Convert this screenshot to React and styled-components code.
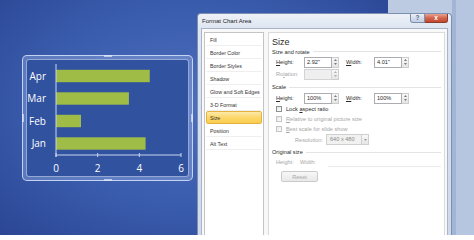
import React from 'react';
import styled, { createGlobalStyle } from 'styled-components';

const GlobalStyle = createGlobalStyle`
  html, body {
    margin: 0;
    padding: 0;
    width: 474px;
    height: 235px;
    overflow: hidden;
  }
  body {
    font-family: "Liberation Sans", Arial, sans-serif;
  }
`;

const Stage = styled.div`
  width: 474px;
  height: 235px;
  overflow: hidden;
  display: flex;
  align-items: flex-start;
  background:
    linear-gradient(90deg, transparent 0 388px, #bccae2 388px 452px, #a2b5d5 452px 456px, #b6c6e0 456px 100%),
    radial-gradient(ellipse 70% 95% at 40% 45%, #4d6ebd 0%, #3a5cac 45%, #2c4897 78%, #213c88 100%);
`;

/* ---------- chart ---------- */

const ChartFrame = styled.div`
  position: relative;
  flex-shrink: 0;
  margin: 55px 0 0 22px;
  width: 171px;
  height: 126px;
  box-sizing: border-box;
  padding: 3px;
  border: 1px solid rgba(215, 226, 250, 0.85);
  border-radius: 5px;
  background: rgba(170, 190, 235, 0.35);
`;

const ChartPlot = styled.div`
  width: 100%;
  height: 100%;
  box-sizing: border-box;
  border: 1px solid rgba(215, 226, 250, 0.6);
  border-radius: 3px;
  background: #31529f;
`;

const Handle = styled.span`
  position: absolute;
  width: ${p => (p.$vertical ? '2px' : '8px')};
  height: ${p => (p.$vertical ? '8px' : '2px')};
  background: rgba(225, 232, 250, 0.7);
  ${p => p.$side === 'top' && 'top: -1px; left: 81px;'}
  ${p => p.$side === 'bottom' && 'bottom: -1px; left: 81px;'}
  ${p => p.$side === 'left' && 'left: -1px; top: 58px;'}
  ${p => p.$side === 'right' && 'right: -1px; top: 58px;'}
`;

const months = [
  { label: 'Apr', value: 4.5 },
  { label: 'Mar', value: 3.5 },
  { label: 'Feb', value: 1.2 },
  { label: 'Jan', value: 4.3 },
];

function BarChart() {
  const x0 = 29;
  const unit = 125 / 6;
  const axisY = 95;
  return (
    <svg width="161" height="116" viewBox="0 0 161 116">
      {months.map((m, i) => {
        const cy = 16 + i * 22.5;
        return (
          <g key={m.label}>
            <rect x={x0} y={cy - 6.2} width={m.value * unit} height={12.4} fill="#9fbc47" />
            <text
              x="19"
              y={cy + 3.5}
              textAnchor="end"
              fill="#ffffff"
              fontSize="10"
              fontFamily="'Open Sans', sans-serif"
            >
              {m.label}
            </text>
          </g>
        );
      })}
      <line x1={x0} y1="4" x2={x0} y2={axisY + 2} stroke="#c9d5f0" strokeWidth="1" />
      <line x1={x0} y1={axisY} x2={x0 + 6 * unit} y2={axisY} stroke="#c9d5f0" strokeWidth="1" />
      {[0, 2, 4, 6].map(t => (
        <g key={t}>
          <line
            x1={x0 + t * unit}
            y1={axisY - 2}
            x2={x0 + t * unit}
            y2={axisY + 2}
            stroke="#c9d5f0"
            strokeWidth="1"
          />
          <text
            x={x0 + t * unit}
            y="111.5"
            textAnchor="middle"
            fill="#ffffff"
            fontSize="10"
            fontFamily="'Open Sans', sans-serif"
          >
            {t}
          </text>
        </g>
      ))}
    </svg>
  );
}

/* ---------- dialog ---------- */

const Dialog = styled.div`
  flex-shrink: 0;
  margin: 13px 0 0 4px;
  width: 255px;
  height: 230px;
  box-sizing: border-box;
  display: flex;
  flex-direction: column;
  padding: 0 3px;
  background: linear-gradient(180deg, #edf1f7 0, #dde5f1 15px, #cfd9ea 100%);
  border: 1px solid #7d90b2;
  border-bottom: none;
  border-radius: 4px 4px 0 0;
`;

const TitleBar = styled.div`
  display: flex;
  align-items: flex-start;
  height: 14px;
`;

const Title = styled.span`
  padding-left: 1px;
  font-size: 6px;
  line-height: 14px;
  color: #1c1c1c;
`;

const CaptionButtons = styled.div`
  display: flex;
  margin-left: auto;
`;

const CaptionButton = styled.div`
  width: ${p => (p.$close ? '23px' : '15px')};
  height: 9px;
  box-sizing: border-box;
  display: flex;
  align-items: center;
  justify-content: center;
  font-size: 6.5px;
  font-weight: bold;
  line-height: 1;
  color: ${p => (p.$close ? '#ffffff' : '#5a6478')};
  background: ${p =>
    p.$close
      ? 'linear-gradient(180deg, #e8a391 0%, #d2644c 50%, #c2462f 100%)'
      : 'linear-gradient(180deg, #eef2f8 0%, #d3dceb 50%, #c3cfe2 100%)'};
  border: 1px solid ${p => (p.$close ? '#8c3b2b' : '#7d8fae')};
  border-top: none;
  border-left: ${p => (p.$close ? 'none' : '1px solid #7d8fae')};
  border-radius: ${p => (p.$close ? '0 0 3px 0' : '0 0 0 3px')};
`;

const Body = styled.div`
  flex: 1;
  min-height: 0;
  display: flex;
  gap: 4px;
  padding: 3px 2px 0;
  background: #f8f8f8;
  border: 1px solid #a7b4c9;
  border-bottom: none;
`;

const CategoryList = styled.div`
  width: 60px;
  flex-shrink: 0;
  box-sizing: border-box;
  padding: 0 1px;
  background: #ffffff;
  border: 1px solid #c4c4c4;
`;

const CategoryItem = styled.div`
  height: 13px;
  box-sizing: border-box;
  padding-left: 3px;
  font-size: 5.3px;
  line-height: 12px;
  white-space: nowrap;
  overflow: hidden;
  color: #333333;
  border: 1px solid transparent;
  border-bottom-color: ${p => (p.$selected ? '#e4b241' : '#efefef')};
  ${p =>
    p.$selected &&
    `
    background: linear-gradient(180deg, #fde9a8 0%, #fbd76c 50%, #f9cd4f 100%);
    border-color: #e4b241;
    border-radius: 2px;
  `}
`;

const Panel = styled.div`
  flex: 1;
  display: flex;
  flex-direction: column;
  padding: 4px 3px 0;
  background: #ffffff;
  border: 1px solid #dadada;
  border-bottom: none;
  font-size: 5.6px;
  white-space: nowrap;
  color: #2b2b2b;
`;

const Heading = styled.div`
  height: 10px;
  font-size: 9px;
  line-height: 10px;
  color: #2a2a2a;
`;

const GroupHeader = styled.div`
  display: flex;
  align-items: center;
  height: ${p => p.$h || 9}px;
  margin-top: ${p => p.$mt || 0}px;
  color: #2b2b2b;

  &::after {
    content: '';
    flex: 1;
    height: 1px;
    margin-left: 3px;
    background: #e4e4e4;
  }
`;

const FieldRow = styled.div`
  display: flex;
  align-items: center;
  height: 12px;
  padding-left: 4px;
`;

const FieldLabel = styled.span`
  width: 28px;
  flex-shrink: 0;
  color: ${p => (p.$disabled ? '#a6a6a6' : '#2b2b2b')};
`;

const SpinBox = styled.div`
  display: flex;
  height: 11px;
  margin-right: 7px;
`;

const SpinInput = styled.div`
  width: 28px;
  box-sizing: border-box;
  padding-left: 2px;
  line-height: 9px;
  border: 1px solid ${p => (p.$disabled ? '#d4d4d4' : '#abadb3')};
  background: ${p => (p.$disabled ? '#efefef' : '#ffffff')};
  color: #2b2b2b;
`;

const SpinButtons = styled.div`
  width: 7px;
  box-sizing: border-box;
  display: flex;
  flex-direction: column;
  align-items: center;
  justify-content: space-evenly;
  border: 1px solid #cdcdcd;
  border-left: none;
  background: linear-gradient(180deg, #f8f8f8, #e5e5e5);
`;

const CheckRow = styled.div`
  display: flex;
  align-items: center;
  gap: 4px;
  height: 10px;
  padding-left: 4px;
  color: ${p => (p.$disabled ? '#a6a6a6' : '#2b2b2b')};
`;

const CheckBox = styled.span`
  width: 6px;
  height: 6px;
  box-sizing: border-box;
  border: 1px solid ${p => (p.$disabled ? '#c4c4c4' : '#8e8f8f')};
  background: linear-gradient(135deg, #e6e6e6, #ffffff);
`;

const ResolutionRow = styled.div`
  display: flex;
  align-items: center;
  height: 11px;
  padding-left: 23px;
  color: #a6a6a6;
`;

const ResolutionLabel = styled.span`
  width: 31px;
`;

const SelectBox = styled.div`
  display: flex;
  height: 11px;
`;

const SelectValue = styled.div`
  width: 36px;
  box-sizing: border-box;
  padding-left: 3px;
  line-height: 9px;
  border: 1px solid #d0d0d0;
  background: #f1f1f1;
  color: #8a8a8a;
`;

const SelectArrow = styled.div`
  width: 7px;
  box-sizing: border-box;
  display: flex;
  align-items: center;
  justify-content: center;
  border: 1px solid #d0d0d0;
  border-left: none;
  background: linear-gradient(180deg, #f8f8f8, #e6e6e6);
`;

const OriginalRow = styled.div`
  display: flex;
  align-items: center;
  height: 10px;
  padding-left: 4px;
  color: #a6a6a6;

  &::after {
    content: '';
    flex: 1;
    height: 1px;
    align-self: flex-end;
    margin-left: 8px;
    background: #ececec;
  }
`;

const OriginalLabel = styled.span`
  width: ${p => p.$w}px;
`;

const ResetButton = styled.div`
  width: 37px;
  height: 11px;
  margin: 4px 0 0 9px;
  box-sizing: border-box;
  display: flex;
  align-items: center;
  justify-content: center;
  border: 1px solid #cacaca;
  border-radius: 2px;
  background: linear-gradient(180deg, #f7f7f7, #e9e9e9);
  color: #a8a8a8;
`;

function Arrow({ up, color = '#7a7a7a' }) {
  return (
    <svg width="3" height="2" viewBox="0 0 3 2">
      <path d={up ? 'M0 2 L1.5 0 L3 2 Z' : 'M0 0 L1.5 2 L3 0 Z'} fill={color} />
    </svg>
  );
}

function Spin({ value, disabled }) {
  return (
    <SpinBox>
      <SpinInput $disabled={disabled}>{value}</SpinInput>
      <SpinButtons>
        <Arrow up color={disabled ? '#b0b0b0' : '#7a7a7a'} />
        <Arrow color={disabled ? '#b0b0b0' : '#7a7a7a'} />
      </SpinButtons>
    </SpinBox>
  );
}

const categories = [
  'Fill',
  'Border Color',
  'Border Styles',
  'Shadow',
  'Glow and Soft Edges',
  '3-D Format',
  'Size',
  'Position',
  'Alt Text',
];

export default function App() {
  return (
    <>
      <GlobalStyle />
      <Stage>
        <ChartFrame>
          <ChartPlot>
            <BarChart />
          </ChartPlot>
          <Handle $side="top" />
          <Handle $side="bottom" />
          <Handle $side="left" $vertical />
          <Handle $side="right" $vertical />
        </ChartFrame>

        <Dialog>
          <TitleBar>
            <Title>Format Chart Area</Title>
            <CaptionButtons>
              <CaptionButton>?</CaptionButton>
              <CaptionButton $close>x</CaptionButton>
            </CaptionButtons>
          </TitleBar>

          <Body>
            <CategoryList>
              {categories.map(c => (
                <CategoryItem key={c} $selected={c === 'Size'}>
                  {c}
                </CategoryItem>
              ))}
            </CategoryList>

            <Panel>
              <Heading>Size</Heading>
              <GroupHeader>Size and rotate</GroupHeader>
              <FieldRow>
                <FieldLabel><u>H</u>eight:</FieldLabel>
                <Spin value='2.92"' />
                <FieldLabel><u>W</u>idth:</FieldLabel>
                <Spin value='4.01"' />
              </FieldRow>
              <FieldRow>
                <FieldLabel $disabled>Ro<u>t</u>ation:</FieldLabel>
                <Spin value="" disabled />
              </FieldRow>
              <GroupHeader $h={10} $mt={2}>Scale</GroupHeader>
              <FieldRow>
                <FieldLabel><u>H</u>eight:</FieldLabel>
                <Spin value="100%" />
                <FieldLabel><u>W</u>idth:</FieldLabel>
                <Spin value="100%" />
              </FieldRow>
              <CheckRow>
                <CheckBox />
                <span>Lock <u>a</u>spect ratio</span>
              </CheckRow>
              <CheckRow $disabled>
                <CheckBox $disabled />
                <span><u>R</u>elative to original picture size</span>
              </CheckRow>
              <CheckRow $disabled>
                <CheckBox $disabled />
                <span><u>B</u>est scale for slide show</span>
              </CheckRow>
              <ResolutionRow>
                <ResolutionLabel>Resolution:</ResolutionLabel>
                <SelectBox>
                  <SelectValue>640 x 480</SelectValue>
                  <SelectArrow>
                    <Arrow color="#9a9a9a" />
                  </SelectArrow>
                </SelectBox>
              </ResolutionRow>
              <GroupHeader $h={10} $mt={2}>Original size</GroupHeader>
              <OriginalRow>
                <OriginalLabel $w={24}>Height:</OriginalLabel>
                <OriginalLabel $w={20}>Width:</OriginalLabel>
              </OriginalRow>
              <ResetButton>Reset</ResetButton>
            </Panel>
          </Body>
        </Dialog>
      </Stage>
    </>
  );
}
